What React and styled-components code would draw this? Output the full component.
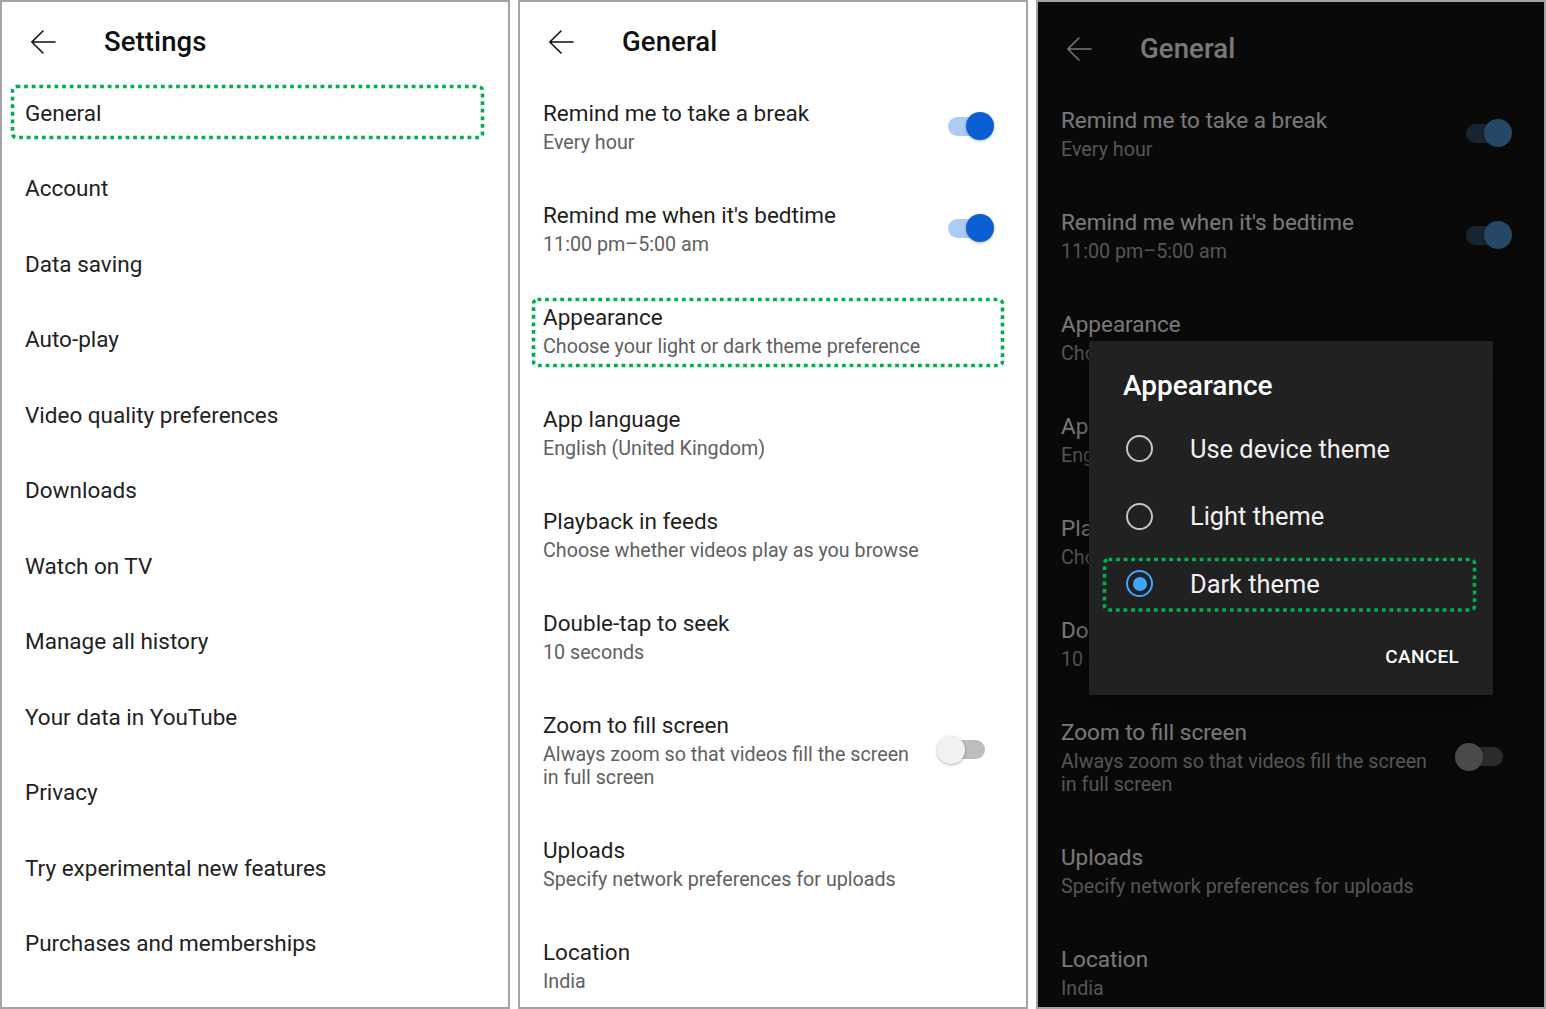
import React from "react";
import styled, { createGlobalStyle } from "styled-components";

const GlobalStyle = createGlobalStyle`
  html, body {
    margin: 0;
    padding: 0;
    background: #fff;
  }
  body {
    font-family: Roboto, "Noto Sans", "Liberation Sans", sans-serif;
  }
`;

const Page = styled.div`
  display: flex;
  justify-content: space-between;
  width: 1546px;
  height: 1009px;
`;

const Panel = styled.section`
  position: relative;
  width: 510px;
  height: 1009px;
  box-sizing: border-box;
  border: 2px solid #a4a4a4;
  background: ${(p) => (p.$dark ? "#121212" : "#fff")};
  overflow: hidden;
`;

const Header = styled.header`
  display: flex;
  align-items: center;
  height: ${(p) => (p.$dark ? "80px" : "73px")};
  box-sizing: border-box;
  padding: ${(p) => (p.$dark ? "13px" : "6px")} 0 0 28px;
  color: ${(p) => (p.$dark ? "#f1f1f1" : "#0f0f0f")};
`;

const HeaderTitle = styled.h1`
  margin: 0 0 0 48px;
  font-size: 27.5px;
  font-weight: 500;
  line-height: 34px;
  letter-spacing: 0.1px;
`;

const ArrowSvg = styled.svg`
  display: block;
  flex: none;
`;

const BackArrow = () => (
  <ArrowSvg width="26" height="24" viewBox="0 0 26 24" fill="none">
    <path
      d="M25 12H1.8M13 1L1.8 12L13 23"
      stroke="currentColor"
      strokeWidth="1.6"
      strokeLinecap="round"
      strokeLinejoin="round"
    />
  </ArrowSvg>
);

const List = styled.ul`
  list-style: none;
  margin: 0;
  padding: 0;
`;

const MenuRow = styled.li`
  position: relative;
  display: flex;
  align-items: center;
  height: 75.5px;
  padding-left: 23px;
  font-size: 22.5px;
  color: #222;
`;

const SettingRow = styled.li`
  position: relative;
  display: flex;
  align-items: center;
  padding: 23px 32px 23px 23px;
`;

const RowText = styled.div`
  flex: 1;
  min-width: 0;
  margin-right: 16px;
`;

const RowTitle = styled.div`
  font-size: 22.5px;
  line-height: 30px;
  color: ${(p) => (p.$dark ? "#f1f1f1" : "#1f1f1f")};
`;

const RowSub = styled.div`
  margin-top: 3px;
  font-size: 19.7px;
  line-height: 23px;
  color: ${(p) => (p.$dark ? "#aaaaaa" : "#606060")};
`;

const Switch = styled.span`
  position: relative;
  flex: none;
  width: 57px;
  height: 28px;
`;

const Track = styled.span`
  position: absolute;
  left: 11px;
  top: 4.5px;
  width: 37px;
  height: 19px;
  border-radius: 10px;
  background: ${(p) =>
    p.$dark
      ? p.$on
        ? "#2f4a66"
        : "#575757"
      : p.$on
      ? "#aecbf5"
      : "#bdbdbd"};
`;

const Knob = styled.span`
  position: absolute;
  top: 0;
  left: ${(p) => (p.$on ? "29px" : "0")};
  width: 28px;
  height: 28px;
  border-radius: 50%;
  background: ${(p) =>
    p.$dark
      ? p.$on
        ? "#4a8fd0"
        : "#969696"
      : p.$on
      ? "#0b5fd2"
      : "#f1f1f1"};
  box-shadow: 0 1px 3px rgba(0, 0, 0, 0.3);
`;

const Toggle = ({ on, dark }) => (
  <Switch>
    <Track $on={on} $dark={dark} />
    <Knob $on={on} $dark={dark} />
  </Switch>
);

// dotted green annotation frame drawn over a row
const FrameSvg = styled.svg`
  position: absolute;
  top: ${(p) => p.$t}px;
  left: ${(p) => p.$l}px;
  width: calc(100% - ${(p) => p.$l + p.$r}px);
  height: calc(100% - ${(p) => p.$t + p.$b}px);
  overflow: visible;
  pointer-events: none;
`;

const Frame = ({ t, l, r, b }) => (
  <FrameSvg $t={t} $l={l} $r={r} $b={b}>
    <rect
      x="1.5"
      y="1.5"
      style={{ width: "calc(100% - 3px)", height: "calc(100% - 3px)" }}
      rx="4"
      fill="none"
      stroke="#00b050"
      strokeWidth="3.6"
      strokeDasharray="3.8 3.8"
    />
  </FrameSvg>
);

const Scrim = styled.div`
  position: absolute;
  inset: 0;
  background: rgba(0, 0, 0, 0.5);
`;

const Dialog = styled.div`
  position: absolute;
  left: 51px;
  top: 339px;
  width: 404px;
  height: 354px;
  box-sizing: border-box;
  padding-top: 28px;
  background: #212121;
  border-radius: 2px;
  box-shadow: 0 8px 24px rgba(0, 0, 0, 0.5);
  color: #f1f1f1;
`;

const DialogTitle = styled.h2`
  margin: 0 0 12px 34px;
  font-size: 28px;
  font-weight: 500;
  line-height: 34px;
  color: #fff;
`;

const Option = styled.label`
  position: relative;
  display: flex;
  align-items: center;
  height: 67.5px;
  padding-left: 37px;
  font-size: 25.4px;
  color: #f1f1f1;
`;

const Radio = styled.span`
  flex: none;
  display: flex;
  align-items: center;
  justify-content: center;
  width: 27px;
  height: 27px;
  box-sizing: border-box;
  margin-right: 37px;
  border-radius: 50%;
  border: 2.5px solid ${(p) => (p.$on ? "#3ea6ff" : "#c6c6c6")};

  &::after {
    content: "";
    display: ${(p) => (p.$on ? "block" : "none")};
    width: 14px;
    height: 14px;
    border-radius: 50%;
    background: #3ea6ff;
  }
`;

const Actions = styled.div`
  display: flex;
  justify-content: flex-end;
  margin-top: 24px;
  padding-right: 34px;
`;

const TextButton = styled.button`
  border: 0;
  padding: 0;
  background: none;
  font-family: inherit;
  font-size: 19px;
  font-weight: 500;
  line-height: 30px;
  letter-spacing: 0.3px;
  color: #fff;
`;

const menu = [
  "General",
  "Account",
  "Data saving",
  "Auto-play",
  "Video quality preferences",
  "Downloads",
  "Watch on TV",
  "Manage all history",
  "Your data in YouTube",
  "Privacy",
  "Try experimental new features",
  "Purchases and memberships",
];

const general = [
  { title: "Remind me to take a break", sub: "Every hour", toggle: true },
  { title: "Remind me when it's bedtime", sub: "11:00 pm\u20135:00 am", toggle: true },
  { title: "Appearance", sub: "Choose your light or dark theme preference", marked: true },
  { title: "App language", sub: "English (United Kingdom)" },
  { title: "Playback in feeds", sub: "Choose whether videos play as you browse" },
  { title: "Double-tap to seek", sub: "10 seconds" },
  {
    title: "Zoom to fill screen",
    sub: "Always zoom so that videos fill the screen in full screen",
    toggle: false,
  },
  { title: "Uploads", sub: "Specify network preferences for uploads" },
  { title: "Location", sub: "India" },
];

const themes = ["Use device theme", "Light theme", "Dark theme"];

const GeneralList = ({ dark }) => (
  <List>
    {general.map((item) => (
      <SettingRow key={item.title}>
        <RowText>
          <RowTitle $dark={dark}>{item.title}</RowTitle>
          <RowSub $dark={dark}>{item.sub}</RowSub>
        </RowText>
        {item.toggle !== undefined && <Toggle on={item.toggle} dark={dark} />}
        {item.marked && !dark && <Frame t={19} l={12} r={22} b={14} />}
      </SettingRow>
    ))}
  </List>
);

export default function App() {
  return (
    <>
      <GlobalStyle />
      <Page>
        <Panel>
          <Header>
            <BackArrow />
            <HeaderTitle>Settings</HeaderTitle>
          </Header>
          <List>
            {menu.map((label, i) => (
              <MenuRow key={label}>
                {label}
                {i === 0 && <Frame t={10} l={9} r={24} b={11.5} />}
              </MenuRow>
            ))}
          </List>
        </Panel>

        <Panel>
          <Header>
            <BackArrow />
            <HeaderTitle>General</HeaderTitle>
          </Header>
          <GeneralList />
        </Panel>

        <Panel $dark>
          <Header $dark>
            <BackArrow />
            <HeaderTitle>General</HeaderTitle>
          </Header>
          <GeneralList dark />
          <Scrim />
          <Dialog>
            <DialogTitle>Appearance</DialogTitle>
            {themes.map((t, i) => (
              <Option key={t}>
                <Radio $on={i === 2} />
                {t}
                {i === 2 && <Frame t={8} l={14} r={17} b={6} />}
              </Option>
            ))}
            <Actions>
              <TextButton>CANCEL</TextButton>
            </Actions>
          </Dialog>
        </Panel>
      </Page>
    </>
  );
}
